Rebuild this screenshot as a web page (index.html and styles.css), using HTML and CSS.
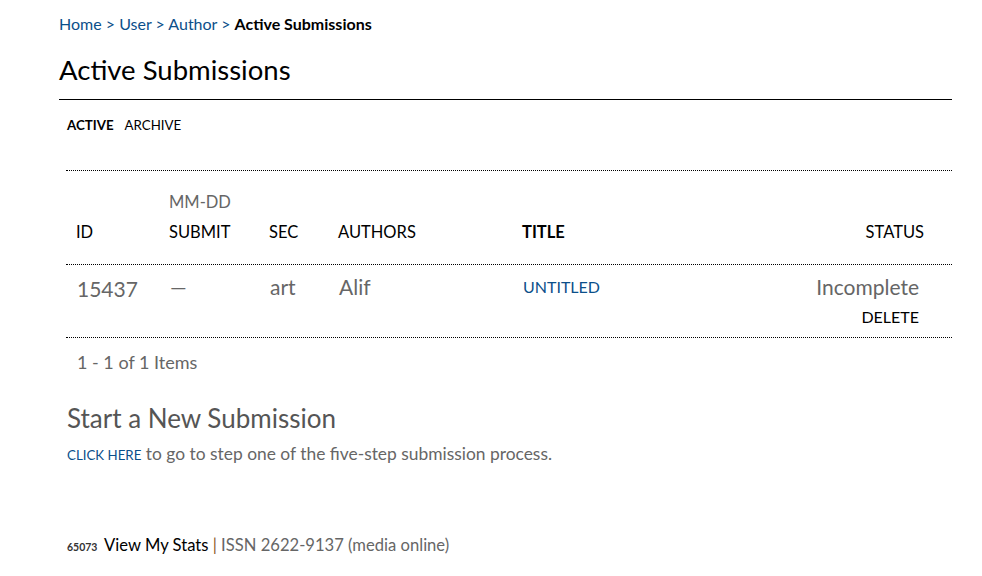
FILE: index.html
```html
<!DOCTYPE html>
<html lang="en">
<head>
  <meta charset="UTF-8">
  <title>Active Submissions</title>
  <link rel="stylesheet" href="styles.css">
</head>
<body>
  <div class="main">
    <div class="breadcrumb">
      <a href="#">Home</a> &gt; <a href="#">User</a> &gt; <a href="#">Author</a> &gt; <strong>Active Submissions</strong>
    </div>
    <h1 class="page-title">Active Submissions</h1>

    <ul class="tabs">
      <li class="current"><a href="#">Active</a></li>
      <li><a href="#">Archive</a></li>
    </ul>

    <div class="listing">
      <div class="list-row list-head">
        <div class="cell">ID</div>
        <div class="cell"><span class="date-fmt">MM-DD</span>Submit</div>
        <div class="cell">Sec</div>
        <div class="cell">Authors</div>
        <div class="cell sorted">Title</div>
        <div class="cell right">Status</div>
      </div>
      <div class="list-row list-item">
        <div class="cell num">15437</div>
        <div class="cell">&mdash;</div>
        <div class="cell">art</div>
        <div class="cell">Alif</div>
        <div class="cell title-cell"><a href="#" class="action">Untitled</a></div>
        <div class="cell right status-cell">
          Incomplete<br>
          <a href="#" class="delete">Delete</a>
        </div>
      </div>
    </div>

    <p class="items">1 - 1 of 1 Items</p>

    <h3 class="new-title">Start a New Submission</h3>
    <p class="new-text"><a href="#" class="action">Click Here</a> to go to step one of the five-step submission process.</p>

    <div class="footer">
      <span class="counter">65073</span>
      <a href="#" class="stats-link">View My Stats</a> <span class="sep">|</span> ISSN 2622-9137 (media online)
    </div>
  </div>
</body>
</html>
```

FILE: styles.css
```css
body {
  margin: 0;
  background: #fff;
  font-family: Lato, "Open Sans", sans-serif;
  color: #666;
}
a {
  text-decoration: none;
  color: #0b4f8a;
}
.main {
  width: 893px;
  margin-left: 59px;
  padding-top: 14px;
}
.breadcrumb {
  font-size: 16px;
  line-height: 20px;
  color: #0b4f8a;
}
.breadcrumb strong {
  color: #000;
}
.page-title {
  margin: 0;
  padding: 20px 0 13px;
  font-size: 27.5px;
  line-height: 32px;
  font-weight: normal;
  color: #000;
  border-bottom: 1px solid #000;
}
.tabs {
  list-style: none;
  margin: 0;
  padding: 14px 0 0 8px;
  display: flex;
  gap: 11px;
  height: 56px;
}
.tabs a {
  font-size: 13.3px;
  line-height: 18px;
  text-transform: uppercase;
  color: #000;
}
.tabs .current a {
  font-weight: bold;
}

/* submissions listing */
.listing {
  margin-left: 7px;
  border-top: 1px dotted #000;
}
.list-row {
  display: grid;
  grid-template-columns: 93px 100px 69px 184px 1fr 220px;
  border-bottom: 1px dotted #000;
}
.list-head {
  height: 71px;
  padding-bottom: 22px;
  align-items: end;
  font-size: 16.5px;
  line-height: 20px;
  text-transform: uppercase;
  color: #000;
}
.list-head .cell {
  padding-left: 10px;
}
.list-head .sorted {
  font-weight: bold;
}
.list-head .right {
  text-align: right;
  padding-right: 28px;
}
.date-fmt {
  display: block;
  color: #666;
  margin-bottom: 10px;
}
.list-item {
  height: 62px;
  padding-top: 10px;
  align-items: start;
  font-size: 21px;
  line-height: 24px;
}
.list-item .cell {
  padding-left: 11px;
}
.list-item .num {
  padding-top: 2px;
}
.list-item .title-cell {
  padding-top: 2px;
  font-size: 16px;
  line-height: 20px;
}
.list-item .status-cell {
  text-align: right;
  padding-right: 33px;
}
.delete {
  display: inline-block;
  margin-top: 8px;
  font-size: 16px;
  line-height: 20px;
  text-transform: uppercase;
  color: #000;
}
.action {
  text-transform: uppercase;
}

.items {
  margin: 0;
  padding: 13px 0 0 18px;
  font-size: 18px;
  line-height: 22px;
}
.new-title {
  margin: 0;
  padding: 29px 0 0 8px;
  font-size: 26px;
  line-height: 32px;
  font-weight: normal;
  color: #555;
}
.new-text {
  margin: 0;
  padding: 9px 0 0 8px;
  font-size: 17.4px;
  line-height: 22px;
}
.new-text .action {
  font-size: 13.3px;
}
.footer {
  padding: 68px 0 0 8px;
  font-size: 16.6px;
  line-height: 22px;
}
.counter {
  font-size: 10.5px;
  font-weight: bold;
  color: #333;
  vertical-align: middle;
  margin-right: 3px;
}
.stats-link {
  color: #000;
}
.sep {
  color: #8b5a2b;
}
```
